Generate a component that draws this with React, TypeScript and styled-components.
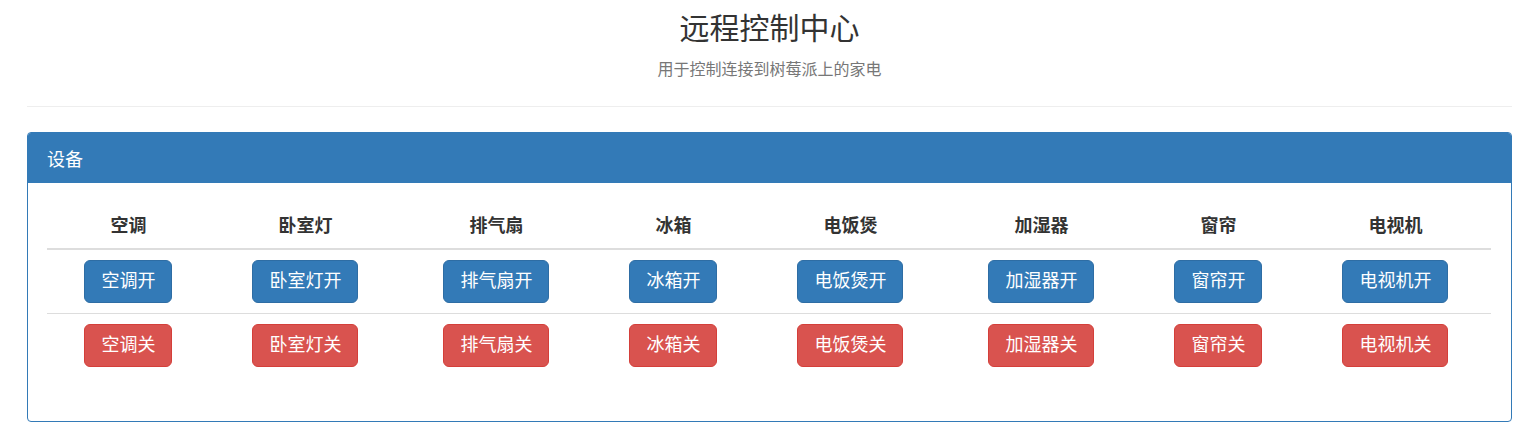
import React from "react";
import styled, { createGlobalStyle } from "styled-components";

const GlobalStyle = createGlobalStyle`
  html, body {
    margin: 0;
    padding: 0;
    background: #fff;
  }
  body {
    font-family: "Liberation Sans", "Noto Sans CJK SC", sans-serif;
    font-size: 14px;
    color: #333;
  }
  * { box-sizing: border-box; }
`;

const Page = styled.div`
  padding: 0 28px 0 27px;
`;

const Header = styled.header`
  display: flex;
  flex-direction: column;
  align-items: center;
  padding-top: 12px;
`;

const Title = styled.h1`
  margin: 0;
  font-size: 30px;
  font-weight: 400;
  line-height: 34px;
  color: #333;
`;

const Subtitle = styled.p`
  margin: 13px 0 0;
  font-size: 16px;
  line-height: 22px;
  color: #777;
`;

const Rule = styled.hr`
  margin: 25px 0 25px;
  border: 0;
  border-top: 1px solid #eee;
`;

const Panel = styled.section`
  border: 1px solid #337ab7;
  border-radius: 4px;
  overflow: hidden;
`;

const PanelHeading = styled.div`
  display: flex;
  align-items: center;
  height: 50px;
  padding: 0 19px;
  background: #337ab7;
  color: #fff;
  font-size: 18px;
`;

const PanelBody = styled.div`
  padding: 21px 20px 44px 19px;
`;

const Table = styled.table`
  width: 100%;
  border-collapse: collapse;
  border-spacing: 0;
`;

const Th = styled.th`
  padding: 10px 8px;
  font-size: 18px;
  line-height: 24px;
  font-weight: 700;
  text-align: center;
  color: #333;
  border-bottom: 2px solid #ddd;
`;

const Td = styled.td`
  padding: 10px 8px;
  text-align: center;
  border-top: 1px solid #ddd;
`;

const Button = styled.button<{ $variant: "on" | "off" }>`
  display: inline-block;
  padding: 8px 16px;
  font-family: inherit;
  font-size: 18px;
  line-height: 25px;
  white-space: nowrap;
  color: #fff;
  border-radius: 6px;
  cursor: pointer;
  background: ${(p) => (p.$variant === "on" ? "#337ab7" : "#d9534f")};
  border: 1px solid ${(p) => (p.$variant === "on" ? "#2e6da4" : "#d43f3a")};
`;

const devices = ["空调", "卧室灯", "排气扇", "冰箱", "电饭煲", "加湿器", "窗帘", "电视机"];

export default function App() {
  return (
    <>
      <GlobalStyle />
      <Page>
        <Header>
          <Title>远程控制中心</Title>
          <Subtitle>用于控制连接到树莓派上的家电</Subtitle>
        </Header>
        <Rule />
        <Panel>
          <PanelHeading>设备</PanelHeading>
          <PanelBody>
            <Table>
              <thead>
                <tr>
                  {devices.map((d) => (
                    <Th key={d}>{d}</Th>
                  ))}
                </tr>
              </thead>
              <tbody>
                <tr>
                  {devices.map((d) => (
                    <Td key={d}>
                      <Button $variant="on">{d}开</Button>
                    </Td>
                  ))}
                </tr>
                <tr>
                  {devices.map((d) => (
                    <Td key={d}>
                      <Button $variant="off">{d}关</Button>
                    </Td>
                  ))}
                </tr>
              </tbody>
            </Table>
          </PanelBody>
        </Panel>
      </Page>
    </>
  );
}
